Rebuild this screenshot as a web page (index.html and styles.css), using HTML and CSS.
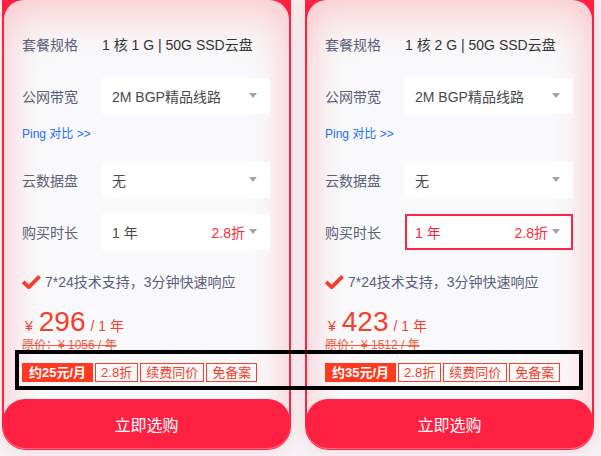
FILE: index.html
```html
<!DOCTYPE html>
<html lang="zh-CN">
<head>
<meta charset="utf-8">
<title>套餐</title>
<link rel="stylesheet" href="styles.css">
</head>
<body>
<div class="cards">
  <div class="card">
    <div class="panel">
      <div class="row"><span class="label">套餐规格</span><span class="value">1 核 1 G | 50G SSD云盘</span></div>
      <div class="row"><span class="label">公网带宽</span><div class="select"><span>2M BGP精品线路</span><i class="arrow"></i></div></div>
      <div class="ping">Ping 对比 &gt;&gt;</div>
      <div class="row"><span class="label">云数据盘</span><div class="select"><span>无</span><i class="arrow"></i></div></div>
      <div class="row"><span class="label">购买时长</span><div class="select"><span>1 年</span><span class="disc">2.8折<i class="arrow"></i></span></div></div>
      <div class="feature"><svg class="check" width="19" height="14" viewBox="0 0 19 14"><path d="M1.2 7 L6.8 12.2 L17.6 1.4" fill="none" stroke="#f2402e" stroke-width="3.8" stroke-linejoin="miter" stroke-linecap="butt"/></svg><span>7*24技术支持，3分钟快速响应</span></div>
      <div class="price"><span class="yen">¥</span><span class="num">296</span><span class="unit">/ 1 年</span></div>
      <div class="orig">原价：¥ 1056 / 年</div>
      <div class="tags"><span class="tag fill">约25元/月</span><span class="tag">2.8折</span><span class="tag">续费同价</span><span class="tag">免备案</span></div>
      <button class="buy">立即选购</button>
    </div>
  </div>
  <div class="card">
    <div class="panel">
      <div class="row"><span class="label">套餐规格</span><span class="value">1 核 2 G | 50G SSD云盘</span></div>
      <div class="row"><span class="label">公网带宽</span><div class="select"><span>2M BGP精品线路</span><i class="arrow"></i></div></div>
      <div class="ping">Ping 对比 &gt;&gt;</div>
      <div class="row"><span class="label">云数据盘</span><div class="select"><span>无</span><i class="arrow"></i></div></div>
      <div class="row"><span class="label">购买时长</span><div class="select active"><span>1 年</span><span class="disc">2.8折<i class="arrow"></i></span></div></div>
      <div class="feature"><svg class="check" width="19" height="14" viewBox="0 0 19 14"><path d="M1.2 7 L6.8 12.2 L17.6 1.4" fill="none" stroke="#f2402e" stroke-width="3.8" stroke-linejoin="miter" stroke-linecap="butt"/></svg><span>7*24技术支持，3分钟快速响应</span></div>
      <div class="price"><span class="yen">¥</span><span class="num">423</span><span class="unit">/ 1 年</span></div>
      <div class="orig">原价：¥ 1512 / 年</div>
      <div class="tags"><span class="tag fill">约35元/月</span><span class="tag">2.8折</span><span class="tag">续费同价</span><span class="tag">免备案</span></div>
      <button class="buy">立即选购</button>
    </div>
  </div>
</div>
<div class="highlight"></div>
</body>
</html>
```
FILE: styles.css
```css
* { box-sizing: border-box; }
html, body { margin: 0; padding: 0; }
body {
  background: #f6f2f5;
  font-family: "Liberation Sans", "Noto Sans CJK SC", sans-serif;
  font-size: 14px;
  width: 601px;
  height: 456px;
  overflow: hidden;
  position: relative;
}
.cards {
  display: flex;
  gap: 14px;
  padding-left: 2px;
}
.card {
  width: 289px;
  background: #ff2141;
  padding: 0 2px 1px 2px;
  border-radius: 0 0 24px 24px;
  box-shadow: 0 0 14px rgba(255, 70, 90, 0.16);
}
.panel {
  height: 449px;
  background: #f9f9fb;
  border-radius: 20px 20px 22px 22px;
  box-shadow: inset 0 0 34px rgba(255, 90, 100, 0.22), inset 0 24px 44px rgba(255, 130, 130, 0.2);
  padding: 26px 17px 0 18px;
  display: flex;
  flex-direction: column;
}
.row {
  display: flex;
  align-items: center;
  height: 36px;
  margin-bottom: 16px;
}
.label {
  width: 80px;
  color: #5b6079;
  flex: none;
}
.value { color: #333; }
.select {
  width: 168px;
  height: 36px;
  background: #fff;
  display: flex;
  align-items: center;
  justify-content: space-between;
  padding: 0 13px 0 10px;
  color: #4a4a4a;
}
.select.active {
  border: 2px solid #ff2442;
  padding: 0 11px 0 8px;
  color: #ff2442;
}
.arrow {
  display: inline-block;
  width: 0;
  height: 0;
  border-left: 4.5px solid transparent;
  border-right: 4.5px solid transparent;
  border-top: 5px solid #a3a3a3;
}
.disc {
  color: #ff2a3a;
  display: flex;
  align-items: center;
  gap: 4px;
}
.ping {
  color: #1a6dff;
  font-size: 12px;
  line-height: 14px;
  margin: -3px 0 21px 0;
}
.feature {
  display: flex;
  align-items: center;
  gap: 4px;
  color: #5b6079;
  line-height: 20px;
  margin-top: 6px;
}
.check { flex: none; }
.price {
  display: flex;
  align-items: baseline;
  color: #f5402a;
  margin-top: 14px;
  padding-left: 3px;
  height: 32px;
}
.yen { font-size: 14px; margin-right: 6px; }
.num { font-size: 28px; margin-right: 5px; }
.unit { font-size: 14px; }
.orig {
  color: #f25a44;
  font-size: 12px;
  line-height: 16px;
  text-decoration: line-through;
  margin-top: -1px;
}
.tags {
  display: flex;
  gap: 2px;
  margin-top: 10px;
}
.tag {
  font-size: 13px;
  height: 19px;
  line-height: 17px;
  padding: 0 5px;
  border: 1px solid #f5402a;
  color: #f5402a;
  white-space: nowrap;
}
.tag.fill {
  background: #ff3a1e;
  border-color: #ff3a1e;
  color: #fff;
  padding: 0 6px;
  font-weight: bold;
}
.buy {
  margin: 17px -18px 0 -19px;
  height: 51px;
  border: none;
  border-radius: 22px;
  background: #ff2141;
  color: #fff;
  font-family: inherit;
  font-size: 16px;
  box-shadow: inset 0 -1px 0 rgba(255, 255, 255, 0.35);
}
.highlight {
  position: absolute;
  left: 15px;
  top: 350px;
  width: 568px;
  height: 40px;
  border: 4px solid #000;
  pointer-events: none;
}
```
